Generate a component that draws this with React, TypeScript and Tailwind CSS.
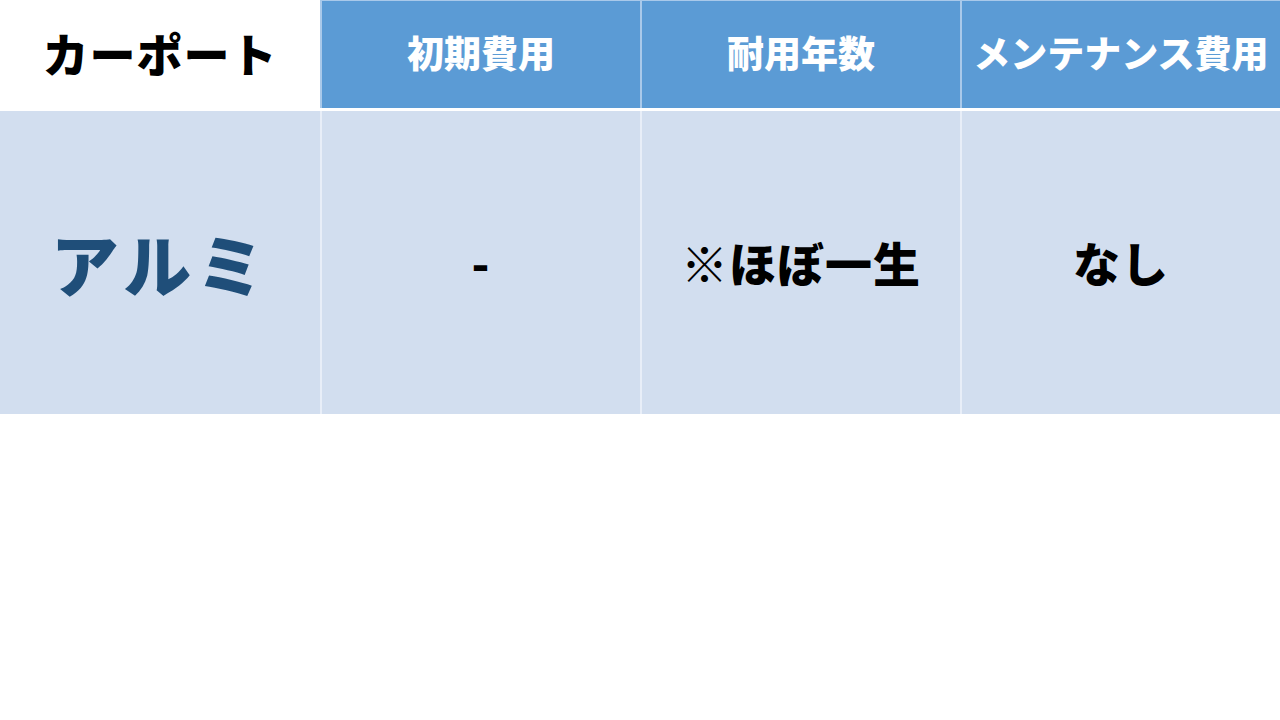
const headers = ["初期費用", "耐用年数", "メンテナンス費用"];
const values = ["-", "※ほぼ一生", "なし"];

export default function App() {
  return (
    <div
      className="w-[1280px] h-[720px] bg-white"
      style={{ fontFamily: '"Noto Sans CJK JP", "Noto Sans", sans-serif' }}
    >
      <div className="flex h-[108px]">
        <div className="w-[320px] flex items-center justify-center pb-[4px] text-[46px] font-black text-black tracking-[1px]">
          カーポート
        </div>
        {headers.map((h) => (
          <div
            key={h}
            className="w-[320px] flex items-center justify-center pb-[4px] bg-[#5b9bd5] border-l-2 border-t border-[#a9c9ea] text-[37px] font-black text-white"
          >
            {h}
          </div>
        ))}
      </div>
      <div className="flex h-[303px] mt-[3px]">
        <div className="w-[320px] flex items-center justify-center bg-[#d2deef] text-[68px] font-black text-[#1f4e79] tracking-[5px]">
          アルミ
        </div>
        {values.map((v) => (
          <div
            key={v}
            className="w-[320px] flex items-center justify-center bg-[#d2deef] border-l-2 border-[#e8eef8] text-[47px] font-black text-black tracking-[1px]"
          >
            {v}
          </div>
        ))}
      </div>
    </div>
  );
}
